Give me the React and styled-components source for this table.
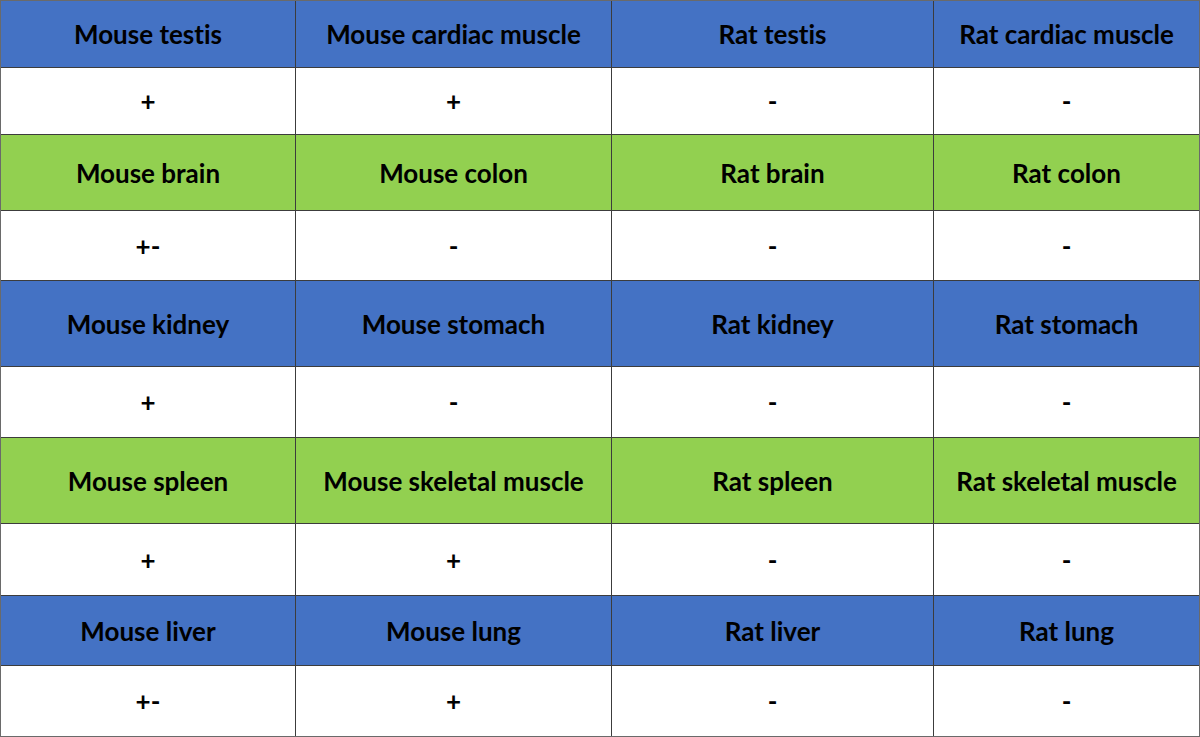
import React from 'react';
import styled, { createGlobalStyle } from 'styled-components';

const GlobalStyle = createGlobalStyle`
  html, body {
    margin: 0;
    padding: 0;
    background: #fff;
  }
  body {
    font-family: Lato, "Open Sans", "Liberation Sans", sans-serif;
  }
`;

const rows = [
  { tone: 'blue', height: 66, cells: ['Mouse testis', 'Mouse cardiac muscle', 'Rat testis', 'Rat cardiac muscle'] },
  { tone: 'white', height: 66, cells: ['+', '+', '-', '-'] },
  { tone: 'green', height: 75, cells: ['Mouse brain', 'Mouse colon', 'Rat brain', 'Rat colon'] },
  { tone: 'white', height: 69, cells: ['+-', '-', '-', '-'] },
  { tone: 'blue', height: 85, cells: ['Mouse kidney', 'Mouse stomach', 'Rat kidney', 'Rat stomach'] },
  { tone: 'white', height: 70, cells: ['+', '-', '-', '-'] },
  { tone: 'green', height: 85, cells: ['Mouse spleen', 'Mouse skeletal muscle', 'Rat spleen', 'Rat skeletal muscle'] },
  { tone: 'white', height: 71, cells: ['+', '+', '-', '-'] },
  { tone: 'blue', height: 69, cells: ['Mouse liver', 'Mouse lung', 'Rat liver', 'Rat lung'] },
  { tone: 'white', height: 70, cells: ['+-', '+', '-', '-'] },
];

const tones = {
  blue: '#4472c4',
  green: '#92d050',
  white: '#ffffff',
};

const App = () => {
  return (
    <>
      <GlobalStyle />
      <Table rowHeights={rows.map((r) => `${r.height}px`).join(' ')}>
        {rows.map((row, i) =>
          row.cells.map((text, j) => (
            <Cell key={`${i}-${j}`} tone={row.tone}>
              {text}
            </Cell>
          ))
        )}
      </Table>
    </>
  );
};

const Table = styled.div`
  display: grid;
  grid-template-columns: 294px 315px 321px 265px;
  grid-template-rows: ${(props) => props.rowHeights};
  gap: 1px;
  width: 1200px;
  box-sizing: border-box;
  background: #3c3c3c;
  border: 1px solid #6a6a6a;
`;

const Cell = styled.div`
  display: flex;
  align-items: center;
  justify-content: center;
  background: ${(props) => tones[props.tone]};
  color: #000;
  font-size: 26px;
  font-weight: 700;
  font-variant-ligatures: none;
`;

export default App;
